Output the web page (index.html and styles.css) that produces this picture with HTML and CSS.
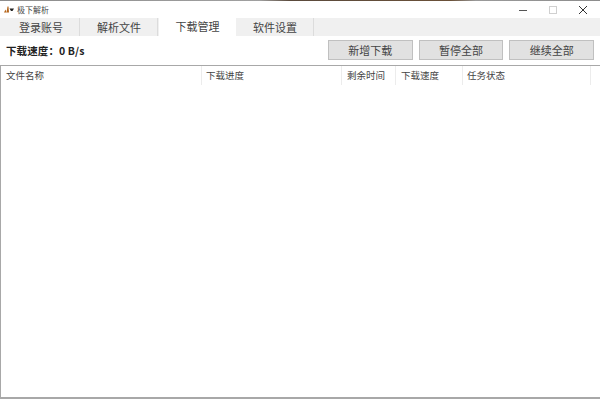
FILE: index.html
```html
<!DOCTYPE html>
<html lang="zh">
<head>
<meta charset="utf-8">
<title>极下解析</title>
<link rel="stylesheet" href="styles.css">
</head>
<body>
<div class="window">
  <div class="titlebar">
    <div class="title-left">
      <svg class="logo" width="10" height="7" viewBox="0 0 10 7"><path d="M0 6.500L1.500 3.500L2.500 6.500Z M2.500 6.500L3.500 0.500H4.500L5 6.500Z" fill="#b5651a"/><path d="M5.500 2.500H10L8.500 5H7Z" fill="#222"/></svg>
      <span class="title-text">极下解析</span>
    </div>
    <div class="controls">
      <svg class="ctl" width="30" height="18" viewBox="0 0 30 18"><path d="M11 9.500H19" stroke="#555" stroke-width="1"/></svg>
      <svg class="ctl" width="30" height="18" viewBox="0 0 30 18"><rect x="11.500" y="5.500" width="7" height="7" fill="none" stroke="#d0d0d0"/></svg>
      <svg class="ctl" width="30" height="18" viewBox="0 0 30 18"><path d="M11 5L19 13M19 5L11 13" stroke="#333" stroke-width="1"/></svg>
    </div>
  </div>
  <div class="tabs">
    <div class="tab">登录账号</div>
    <div class="tab">解析文件</div>
    <div class="tab active">下载管理</div>
    <div class="tab">软件设置</div>
  </div>
  <div class="toolbar">
    <div class="speed">下载速度：0 B/s</div>
    <div class="buttons">
      <div class="btn">新增下载</div>
      <div class="btn">暂停全部</div>
      <div class="btn">继续全部</div>
    </div>
  </div>
  <div class="table">
    <div class="thead">
      <div class="th c1">文件名称</div>
      <div class="th c2">下载进度</div>
      <div class="th c3">剩余时间</div>
      <div class="th c4">下载速度</div>
      <div class="th c5">任务状态</div>
    </div>
  </div>
</div>
</body>
</html>
```
FILE: styles.css
```css
html, body {
  margin: 0;
  padding: 0;
  width: 600px;
  height: 400px;
  overflow: hidden;
  background: #fff;
}
.window {
  width: 600px;
  height: 400px;
  display: flex;
  flex-direction: column;
  box-sizing: border-box;
  border-top: 1px solid #888;
  border-image: linear-gradient(90deg, #8c8c8c 0, #a0a0a0 260px, #5a4a3c 290px, #6a5038 450px, #9a9a9a 475px, #8c8c8c 100%) 1;
  font-family: "Noto Sans CJK SC", "Liberation Sans", sans-serif;
  color: #222;
  background: #fff;
}
.titlebar {
  height: 17px;
  flex: none;
  display: flex;
  justify-content: space-between;
  align-items: center;
  background: #fff;
}
.title-left {
  display: flex;
  align-items: center;
  gap: 3px;
  padding-left: 4px;
}
.title-text {
  font-size: 8px;
  color: #444;
}
.controls {
  display: flex;
  padding-right: 2px;
}
.tabs {
  height: 18px;
  flex: none;
  display: flex;
  background: #f0f0f0;
  padding-left: 3px;
}
.tab {
  width: 77px;
  margin-right: 1px;
  box-sizing: border-box;
  font-size: 11px;
  line-height: 19px;
  text-align: center;
  border-right: 1px solid #dcdcdc;
  color: #444;
}
.tab.active {
  background: #fff;
  height: 20px;
  margin-top: -1px;
  line-height: 19px;
  border-right: 0;
}
.toolbar {
  height: 29px;
  flex: none;
  display: flex;
  justify-content: space-between;
  align-items: center;
  padding: 0 6px 1px;
  box-sizing: border-box;
}
.speed {
  font-size: 10.500px;
  font-weight: 700;
  letter-spacing: 0.100px;
  color: #222;
}
.buttons {
  display: flex;
  gap: 6px;
}
.btn {
  width: 84.670px;
  height: 20px;
  box-sizing: border-box;
  background: #e1e1e1;
  border: 1px solid #c0c0c0;
  font-size: 11px;
  line-height: 18px;
  text-align: center;
  color: #444;
}
.table {
  flex: 1;
  margin-bottom: 1px;
  border: 1px solid #a8a8a8;
  border-right: 0;
  border-bottom: 2px solid #a8a8a8;
  background: #fff;
}
.thead {
  display: flex;
  height: 20px;
}
.th {
  box-sizing: border-box;
  height: 19px;
  font-size: 9.500px;
  line-height: 19px;
  padding-left: 5px;
  border-right: 1px solid #ececec;
  color: #444;
}
.c1 { width: 201px; }
.c2 { width: 140px; padding-left: 4px; }
.c3 { width: 54px; }
.c4 { width: 67px; }
.c5 { width: 128px; padding-left: 4px; }
```
